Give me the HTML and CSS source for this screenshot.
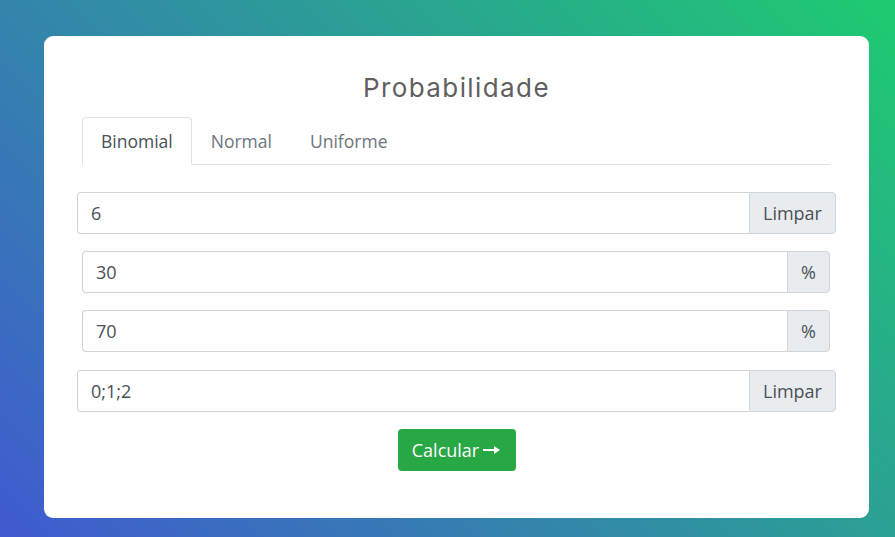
FILE: index.html
```html
<!DOCTYPE html>
<html lang="pt">
<head>
<meta charset="utf-8">
<title>Probabilidade</title>
<link rel="stylesheet" href="styles.css">
</head>
<body>
<div class="card">
  <h2 class="title">Probabilidade</h2>
  <ul class="tabs">
    <li class="tab active">Binomial</li>
    <li class="tab">Normal</li>
    <li class="tab">Uniforme</li>
  </ul>
  <div class="group wide first">
    <div class="field">6</div>
    <div class="addon limpar">Limpar</div>
  </div>
  <div class="group narrow">
    <div class="field">30</div>
    <div class="addon pct">%</div>
  </div>
  <div class="group narrow">
    <div class="field">70</div>
    <div class="addon pct">%</div>
  </div>
  <div class="group wide last">
    <div class="field">0;1;2</div>
    <div class="addon limpar">Limpar</div>
  </div>
  <div class="actions">
    <button class="btn">Calcular <svg class="arrow" width="18" height="10" viewBox="0 0 18 10"><path d="M0 5H14" stroke="#fff" stroke-width="2"/><path d="M11 1L17 5L11 9Z" fill="#fff"/></svg></button>
  </div>
</div>
</body>
</html>
```
FILE: styles.css
```css
html, body {
  margin: 0;
  padding: 0;
}
body {
  width: 895px;
  height: 537px;
  overflow: hidden;
  background: linear-gradient(45deg, #405ad0 0%, #1ecb70 100%);
  font-family: "Open Sans", "Liberation Sans", sans-serif;
  color: #495057;
}
.card {
  box-sizing: border-box;
  margin: 36px 0 0 44px;
  width: 825px;
  height: 482px;
  background: #fff;
  border-radius: 9px;
  padding-top: 36px;
}
.title {
  margin: 0;
  text-align: center;
  font-family: "Inter", "Noto Sans", sans-serif;
  font-weight: 400;
  font-size: 26px;
  line-height: 32px;
  color: #5f5f5f;
  letter-spacing: 1.4px;
}
.tabs {
  list-style: none;
  margin: 13px 39px 0 38px;
  padding: 0;
  display: flex;
  border-bottom: 1px solid #dee2e6;
}
.tab {
  font-size: 17.5px;
  line-height: 26px;
  padding: 10px 18px;
  color: #6c757d;
  border: 1px solid transparent;
  border-top-left-radius: 4px;
  border-top-right-radius: 4px;
  margin-bottom: -1px;
}
.tab.active {
  color: #495057;
  border-color: #dee2e6 #dee2e6 #fff;
  background: #fff;
}
.group {
  display: flex;
  height: 42px;
  box-sizing: border-box;
  margin-top: 17px;
}
.group.first {
  margin-top: 27px;
}
.group.last {
  margin-top: 18px;
}
.group.wide {
  margin-left: 33px;
  margin-right: 33px;
}
.group.narrow {
  margin-left: 38px;
  margin-right: 39px;
}
.field {
  flex: 1;
  border: 1px solid #ced4da;
  border-right: none;
  border-radius: 4px 0 0 4px;
  font-size: 18px;
  line-height: 40px;
  padding: 0 13px;
  color: #495057;
}
.addon {
  border: 1px solid #ced4da;
  border-radius: 0 4px 4px 0;
  background: #e9ecef;
  font-size: 18px;
  line-height: 40px;
  color: #495057;
  text-align: center;
}
.addon.limpar {
  width: 85px;
}
.addon.pct {
  width: 41px;
}
.actions {
  display: flex;
  justify-content: center;
  margin-top: 17px;
}
.btn {
  width: 118px;
  height: 42px;
  border: none;
  border-radius: 4px;
  background: #28a745;
  color: #fff;
  font-family: "Open Sans", "Liberation Sans", sans-serif;
  font-size: 18px;
  padding: 0;
  display: flex;
  align-items: center;
  justify-content: center;
  gap: 4px;
}
.arrow {
  display: block;
}
```
